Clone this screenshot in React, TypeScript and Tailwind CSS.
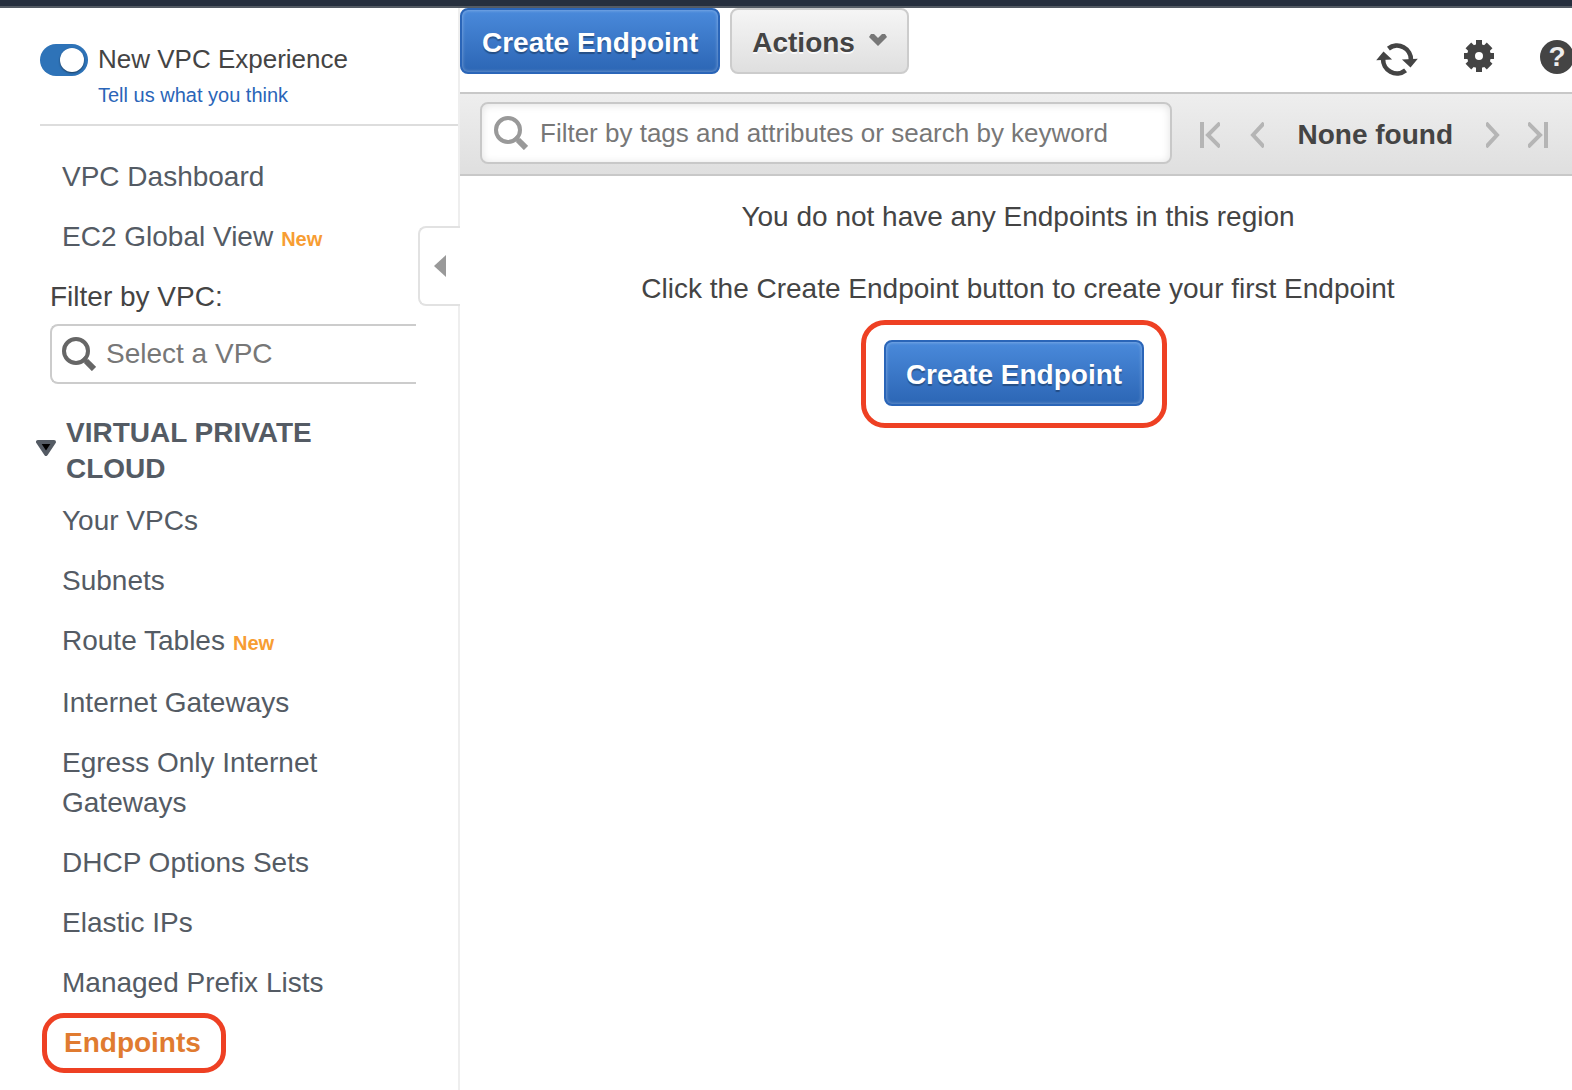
import type { ReactNode } from 'react';

const topLinks = [
  { label: 'VPC Dashboard' },
  { label: 'EC2 Global View', isNew: true },
];

const vpcLinks = [
  { label: 'Your VPCs' },
  { label: 'Subnets' },
  { label: 'Route Tables', isNew: true, className: 'pb-3' },
  { label: 'Internet Gateways' },
  { label: 'Egress Only Internet Gateways' },
  { label: 'DHCP Options Sets' },
  { label: 'Elastic IPs' },
  { label: 'Managed Prefix Lists' },
];

function SearchIcon({ className = '' }: { className?: string }) {
  return (
    <svg viewBox="0 0 34 34" className={`h-[34px] w-[34px] shrink-0 ${className}`} fill="none" stroke="currentColor" aria-hidden="true">
      <circle cx="14" cy="14" r="12" strokeWidth="4" />
      <path d="M21 21L25 25" strokeWidth="4" />
      <path d="M24 24L32 32" strokeWidth="6" />
    </svg>
  );
}

function RefreshIcon() {
  return (
    <svg viewBox="0 0 126 100" className="h-[33px] w-[42px]" aria-hidden="true">
      <g fill="none" stroke="currentColor" strokeWidth="14">
        <path d="M37 17A42 42 0 0 1 105 53" />
        <path d="M89 83A42 42 0 0 1 21 47" />
      </g>
      <path d="M78 50L126 48L104 74Z M0 52L22 26L48 50Z" fill="currentColor" />
    </svg>
  );
}

function GearIcon() {
  return (
    <svg viewBox="0 0 30 32" className="h-8 w-[30px]" aria-hidden="true">
      <circle cx="15" cy="16" r="8" fill="none" stroke="currentColor" strokeWidth="8" />
      <g fill="currentColor">
        {[0, 90, 180, 270].map((angle) => (
          <rect key={angle} x="12" y="0" width="6" height="8" transform={`rotate(${angle} 15 16)`} />
        ))}
        {[45, 135, 225, 315].map((angle) => (
          <rect key={angle} x="11" y="1" width="8" height="8" transform={`rotate(${angle} 15 16)`} />
        ))}
      </g>
    </svg>
  );
}

function PagerIcon({ path, wide }: { path: string; wide?: boolean }) {
  return (
    <svg
      viewBox={wide ? '0 0 20 26' : '0 0 14 26'}
      className={wide ? 'h-[26px] w-5' : 'h-[26px] w-[14px]'}
      fill="none"
      stroke="currentColor"
      strokeWidth="4"
      aria-hidden="true"
    >
      <path d={path} />
    </svg>
  );
}

function PrimaryButton({ children }: { children: ReactNode }) {
  return (
    <button
      type="button"
      className="rounded-lg border-2 border-[#2a65b8] bg-linear-to-b from-[#4a8adb] to-[#2c66b5] px-5 pt-[15px] pb-[11px] text-[28px] leading-9 font-bold whitespace-nowrap text-white shadow-[inset_0_0_3px_1px_rgba(255,255,255,0.25)] [text-shadow:0_2px_1px_rgba(0,0,0,0.3)]"
    >
      {children}
    </button>
  );
}

function NavLink({ label, isNew, className = '' }: { label: string; isNew?: boolean; className?: string }) {
  return (
    <li className={`py-[10px] pr-20 pl-[62px] ${className}`}>
      <a href="#">{label}</a>
      {isNew && <span className="ml-2 text-xl leading-none font-bold text-[#f79d33]">New</span>}
    </li>
  );
}

function Sidebar() {
  return (
    <aside className="relative flex w-[460px] shrink-0 flex-col border-r-2 border-[#eee] text-[28px] leading-10 text-[#545b64]">
      <div className="ml-10 flex items-start gap-[10px] border-b-2 border-[#ddd] pt-9 pb-[15px]">
        <input
          id="new-experience"
          type="checkbox"
          role="switch"
          defaultChecked
          className="relative h-8 w-12 shrink-0 appearance-none rounded-full bg-[#2e73b8] before:absolute before:top-1 before:right-1 before:h-6 before:w-6 before:rounded-full before:bg-white before:shadow-[0_1px_2px_rgba(0,0,0,0.5)]"
        />
        <div className="flex flex-col gap-[7px]">
          <label htmlFor="new-experience" className="text-[26px] leading-[30px] text-[#444]">New VPC Experience</label>
          <a href="#" className="text-xl leading-7 text-[#2a65b8]">Tell us what you think</a>
        </div>
      </div>

      <ul className="pt-[21px]">
        {topLinks.map((link) => (
          <NavLink key={link.label} {...link} />
        ))}
      </ul>

      <div className="flex flex-col gap-[7px] pt-[10px] pl-[50px]">
        <label htmlFor="vpc-filter" className="text-[#444]">Filter by VPC:</label>
        <div className="mr-[42px] flex h-[60px] items-center gap-[10px] rounded-l-lg border-2 border-r-0 border-[#ccc] pl-[10px]">
          <SearchIcon className="text-[#666]" />
          <input id="vpc-filter" type="text" placeholder="Select a VPC" className="w-full min-w-0 bg-transparent outline-none placeholder:text-[#777]" />
        </div>
      </div>

      <h2 className="flex items-center gap-[10px] pt-[31px] pr-20 pb-1 pl-9 leading-9 font-bold">
        <svg viewBox="0 0 20 16" className="mb-[6px] h-4 w-5 shrink-0" aria-hidden="true">
          <path d="M2 2H18L10 14Z" fill="#000" stroke="#545b64" strokeWidth="4" strokeLinejoin="round" />
        </svg>
        VIRTUAL PRIVATE CLOUD
      </h2>
      <ul>
        {vpcLinks.map((link) => (
          <NavLink key={link.label} {...link} />
        ))}
        <li className="ml-[42px] w-[184px] rounded-[22px] border-[5px] border-[#ee4023] py-[5px] pl-[17px]">
          <a href="#" aria-current="page" className="font-bold text-[#e07b30]">Endpoints</a>
        </li>
      </ul>

      {/* Collapse handle sits over the sidebar edge */}
      <button
        type="button"
        aria-label="Collapse sidebar"
        className="absolute top-[218px] -right-[2px] flex h-20 w-[42px] items-center rounded-l-lg border-2 border-r-0 border-[#e2e2e2] bg-white pl-[14px]"
      >
        <svg viewBox="0 0 12 22" className="h-[22px] w-3" aria-hidden="true">
          <path d="M12 0V22L0 11Z" fill="#999" />
        </svg>
      </button>
    </aside>
  );
}

function Toolbar() {
  return (
    <div className="flex h-[84px] items-start justify-between">
      <div className="flex gap-[10px]">
        <PrimaryButton>Create Endpoint</PrimaryButton>
        <button
          type="button"
          className="flex items-center gap-[14px] rounded-lg border-2 border-[#ccc] bg-linear-to-b from-[#f5f5f5] to-[#dfdfdf] px-5 text-[28px] leading-9 font-bold text-[#444] [text-shadow:0_2px_0_rgba(255,255,255,0.8)]"
        >
          <span className="pt-1">Actions</span>
          <svg viewBox="0 0 18 13" className="mb-[2px] h-[13px] w-[18px]" aria-hidden="true">
            <path d="M2 0H5L9 4L13 0H16L18 3L9 12L0 3Z" fill="#777" />
          </svg>
        </button>
      </div>
      <div className="flex gap-[46px] pt-8 pr-[2px] text-[#444]">
        <button type="button" aria-label="Refresh" className="pt-[3px]"><RefreshIcon /></button>
        <button type="button" aria-label="Settings" className="self-start"><GearIcon /></button>
        <button type="button" aria-label="Help" className="flex h-[34px] w-[34px] items-center justify-center rounded-full bg-[#444] text-[28px] leading-none font-bold text-[#eee]">
          ?
        </button>
      </div>
    </div>
  );
}

function FilterBar() {
  return (
    <div className="flex h-[84px] items-center gap-7 border-y-2 border-[#c8c8c8] bg-linear-to-b from-[#eee] to-[#dfdfdf] pr-7 pb-[2px] pl-5 text-[#b5b5b5]">
      <div className="flex h-[62px] flex-1 items-center gap-3 rounded-lg border-2 border-[#c8c8c8] bg-white px-3 shadow-[inset_0_1px_8px_rgba(0,0,0,0.12)]">
        <SearchIcon className="text-[#999]" />
        <input
          type="text"
          aria-label="Filter endpoints"
          placeholder="Filter by tags and attributes or search by keyword"
          className="w-full min-w-0 bg-transparent text-[26px] leading-9 outline-none placeholder:text-[#777]"
        />
      </div>
      <nav aria-label="Pagination" className="flex items-center gap-[33px] pt-[3px]">
        <div className="flex gap-[30px]">
          <button type="button" aria-label="First page"><PagerIcon wide path="M2 0V26M20 1L8 13L20 25" /></button>
          <button type="button" aria-label="Previous page"><PagerIcon path="M14 1L3 13L14 25" /></button>
        </div>
        <span className="text-[28px] leading-9 font-bold whitespace-nowrap text-[#444]">None found</span>
        <div className="flex gap-7">
          <button type="button" aria-label="Next page"><PagerIcon path="M0 1L11 13L0 25" /></button>
          <button type="button" aria-label="Last page"><PagerIcon wide path="M18 0V26M0 1L12 13L0 25" /></button>
        </div>
      </nav>
    </div>
  );
}

export default function App() {
  return (
    <div className="flex min-h-screen flex-col overflow-hidden bg-white font-['Liberation_Sans',Arial,sans-serif]">
      <header className="h-2 border-b-2 border-[#545b64] bg-[#262f3e]" />
      <div className="flex flex-1">
        <Sidebar />
        <main className="-mr-1 min-w-0 flex-1">
          <Toolbar />
          <FilterBar />
          <section className="flex flex-col items-center pt-[23px] text-[28px] leading-9 text-[#444]">
            <p>You do not have any Endpoints in this region</p>
            <p className="pt-9">Click the Create Endpoint button to create your first Endpoint</p>
            <div className="mt-[13px] mr-2 rounded-[24px] border-[5px] border-[#ee4023] px-[18px] pt-[15px] pb-[17px]">
              <PrimaryButton>Create Endpoint</PrimaryButton>
            </div>
          </section>
        </main>
      </div>
    </div>
  );
}
